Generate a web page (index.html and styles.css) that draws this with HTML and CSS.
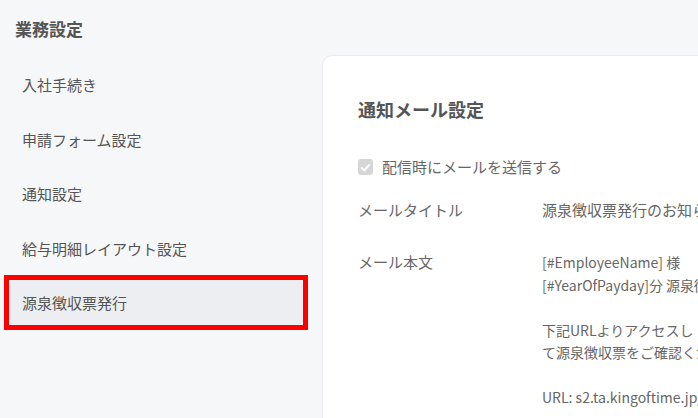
FILE: index.html
```html
<!DOCTYPE html>
<html lang="ja">
<head>
<meta charset="utf-8">
<title>業務設定</title>
<link rel="stylesheet" href="styles.css">
</head>
<body>
<div class="page">
  <aside class="sidebar">
    <h1 class="side-title">業務設定</h1>
    <nav class="menu">
      <a class="menu-item">入社手続き</a>
      <a class="menu-item">申請フォーム設定</a>
      <a class="menu-item">通知設定</a>
      <a class="menu-item">給与明細レイアウト設定</a>
      <a class="menu-item active">源泉徴収票発行</a>
    </nav>
  </aside>
  <main class="card">
    <h2 class="card-title">通知メール設定</h2>
    <label class="check-row">
      <span class="checkbox"><svg width="11" height="9" viewBox="0 0 11 9"><path d="M1.2 4.6 L4.2 7.4 L9.8 1.4" fill="none" stroke="#fff" stroke-width="2"/></svg></span>
      <span>配信時にメールを送信する</span>
    </label>
    <div class="field">
      <div class="field-label">メールタイトル</div>
      <div class="field-value">源泉徴収票発行のお知らせ</div>
    </div>
    <div class="field">
      <div class="field-label">メール本文</div>
      <div class="field-value body-text">[#EmployeeName] 様
[#YearOfPayday]分 源泉徴収票発行のお知らせ

下記URLよりアクセスし
て源泉徴収票をご確認ください。

URL: s2.ta.kingoftime.jp/admin</div>
    </div>
  </main>
</div>
</body>
</html>
```

FILE: styles.css
```css
* { box-sizing: border-box; }
html, body {
  margin: 0;
  height: 100%;
  overflow: hidden;
}
body {
  background: #f6f7f9;
  font-family: "Noto Sans CJK JP", "Noto Sans", sans-serif;
  color: #555;
}
.page {
  display: flex;
  width: 1100px;
  height: 418px;
}
.sidebar {
  width: 322px;
  flex: none;
  padding-top: 17px;
}
.side-title {
  margin: 0 0 0 15px;
  font-size: 17px;
  line-height: 24px;
  font-weight: 700;
  color: #555;
}
.menu {
  display: flex;
  flex-direction: column;
  gap: 9.5px;
  margin-top: 21px;
}
.menu-item {
  display: flex;
  align-items: center;
  height: 45px;
  width: 294px;
  margin-left: 9px;
  padding-left: 13px;
  font-size: 15px;
  color: #555;
  border-radius: 6px;
}
.menu-item.active {
  position: relative;
  background: #eceef1;
}
.menu-item.active::after {
  content: "";
  position: absolute;
  left: -5px;
  top: -5px;
  right: -5px;
  bottom: -5px;
  border: 5px solid #ff0000;
}
.card {
  flex: 1;
  margin-top: 55px;
  background: #fff;
  border: 1px solid #e9eaec;
  border-right: none;
  border-bottom: none;
  border-top-left-radius: 10px;
  padding: 40px 35px;
}
.card-title {
  margin: 0;
  font-size: 18px;
  line-height: 27px;
  font-weight: 700;
  color: #555;
}
.check-row {
  display: flex;
  align-items: center;
  gap: 9px;
  margin-top: 33px;
  font-size: 15px;
  line-height: 22.5px;
  color: #666;
}
.checkbox {
  width: 15px;
  height: 16px;
  border-radius: 3px;
  background: #d6d6d6;
  display: flex;
  align-items: center;
  justify-content: center;
}
.field {
  display: flex;
  margin-top: 20px;
}
.field + .field { margin-top: 30px; }
.field-label {
  width: 184px;
  flex: none;
  font-size: 15px;
  line-height: 22.5px;
  color: #666;
}
.field-value {
  font-size: 15px;
  line-height: 22.5px;
  color: #666;
  white-space: nowrap;
}
.body-text {
  font-size: 14px;
  white-space: pre;
}
```
